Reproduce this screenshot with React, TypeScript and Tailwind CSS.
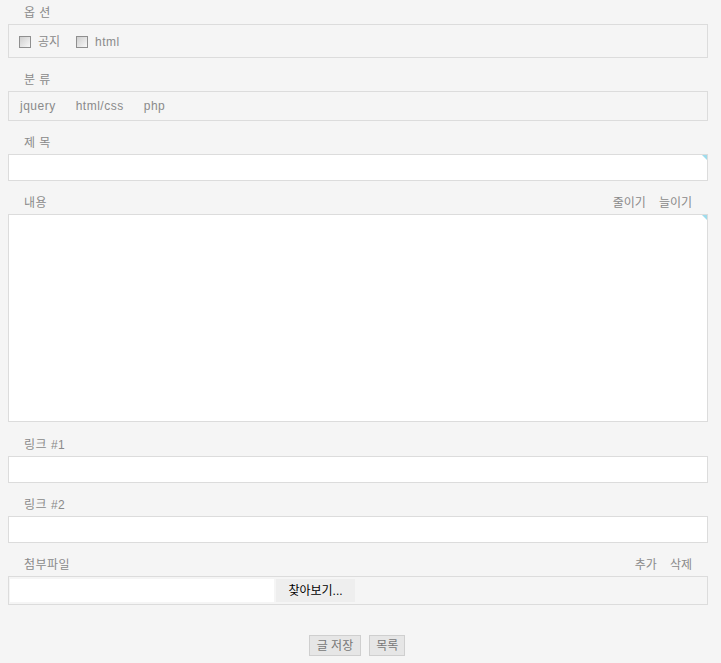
import React from "react";

const font = { fontFamily: '"Liberation Sans", "Noto Sans CJK KR", sans-serif' };

function Corner() {
  return (
    <span className="absolute top-0 right-0 w-0 h-0 border-t-[5px] border-l-[5px] border-t-[#9fdcec] border-l-transparent" />
  );
}

function Label({ text, right }: { text: string; right?: string[] }) {
  return (
    <div className="h-6 flex items-center justify-between pl-4 pr-4 pt-[2px] text-[12px] text-[#8a8a8a]">
      <span className="tracking-[0.5px]">{text}</span>
      {right && (
        <div className="flex gap-[13px]">
          {right.map((r) => (
            <span key={r}>{r}</span>
          ))}
        </div>
      )}
    </div>
  );
}

function CheckBox() {
  return (
    <span className="inline-block w-[12px] h-[12px] border border-[#8f8f8f] bg-gradient-to-br from-[#cfcfcf] to-[#f8f8f8]" />
  );
}

export default function App() {
  return (
    <div className="min-h-[663px] bg-[#f5f5f5] pl-2 pt-0" style={font}>
      <div className="w-[700px]">
        <Label text="옵 션" />
        <div className="h-[34px] border border-[#dcdcdc] flex items-center pl-[10px] pt-[2px] text-[12px] text-[#8a8a8a]">
          <CheckBox />
          <span className="ml-[7px]">공지</span>
          <span className="ml-[16px] flex"><CheckBox /></span>
          <span className="ml-[7px] tracking-[0.5px]">html</span>
        </div>

        <div className="mt-[9px]">
          <Label text="분 류" />
          <div className="h-[30px] border border-[#dcdcdc] flex items-center pl-[11px] gap-[20px] text-[12px] text-[#8a8a8a] tracking-[0.5px]">
            <span>jquery</span>
            <span>html/css</span>
            <span>php</span>
          </div>
        </div>

        <div className="mt-[9px]">
          <Label text="제 목" />
          <div className="relative h-[27px] border border-[#dcdcdc] bg-white">
            <Corner />
          </div>
        </div>

        <div className="mt-[9px]">
          <Label text="내용" right={["줄이기", "늘이기"]} />
          <div className="relative h-[208px] border border-[#dcdcdc] bg-white">
            <Corner />
          </div>
        </div>

        <div className="mt-[10px]">
          <Label text="링크 #1" />
          <div className="h-[27px] border border-[#dcdcdc] bg-white" />
        </div>

        <div className="mt-[9px]">
          <Label text="링크 #2" />
          <div className="h-[27px] border border-[#dcdcdc] bg-white" />
        </div>

        <div className="mt-[9px]">
          <Label text="첨부파일" right={["추가", "삭제"]} />
          <div className="h-[29px] border border-[#dcdcdc] flex items-center pl-[1px]">
            <div className="w-[264px] h-[23px] bg-white" />
            <div className="ml-[2px] w-[79px] h-[23px] bg-[#eeeeee] flex items-center justify-center text-[12px] text-black">
              찾아보기...
            </div>
          </div>
        </div>

        <div className="mt-[30px] flex justify-center gap-[8px] pr-[2px]">
          <button className="h-[21px] px-[7px] border border-[#cfcfcf] bg-[#e6e6e6] text-[12px] text-[#777]">
            글 저장
          </button>
          <button className="h-[21px] px-[6px] border border-[#cfcfcf] bg-[#e6e6e6] text-[12px] text-[#777]">
            목록
          </button>
        </div>
      </div>
    </div>
  );
}
